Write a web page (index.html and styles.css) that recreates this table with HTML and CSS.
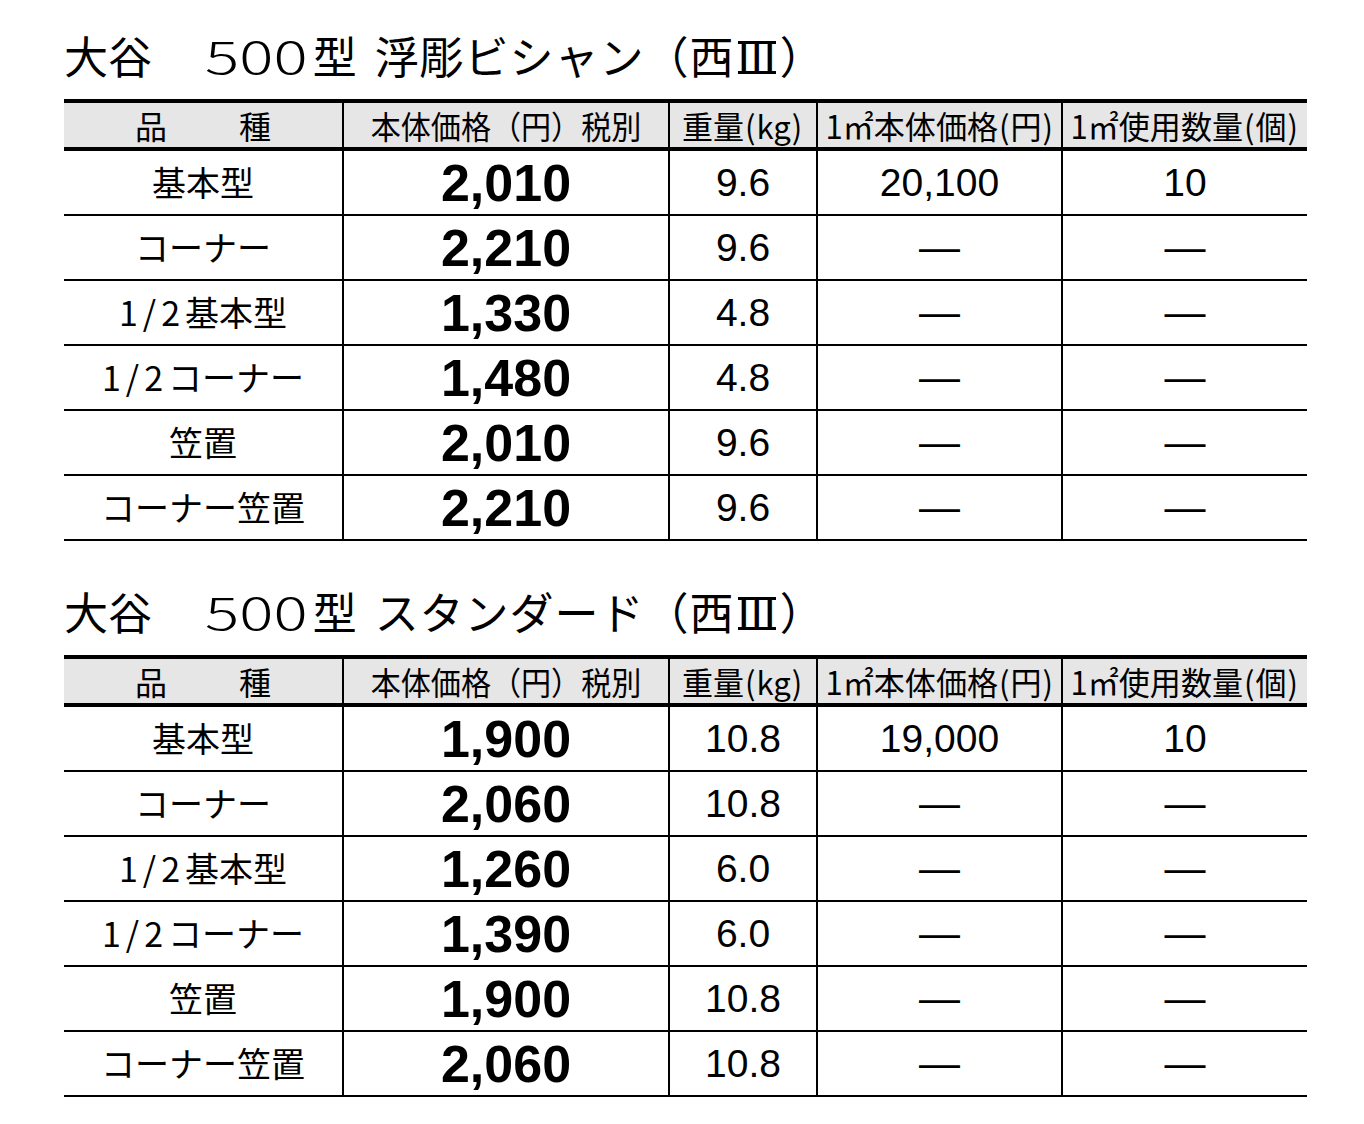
FILE: index.html
```html
<!DOCTYPE html>
<html lang="ja">
<head>
<meta charset="utf-8">
<title>大谷 500型</title>
<link rel="stylesheet" href="styles.css">
</head>
<body>
<div class="page">
  <section class="sec">
    <h2 class="title">大谷<span class="gap">　</span><span class="num">500</span>型<span class="name">浮彫ビシャン（西<span class="r3">Ⅲ</span>）</span></h2>
    <div class="tbl">
      <div class="hd"><span class="hd-name"><span>品</span><span>種</span></span></div>
      <div class="hd"><span class="lbl lbl-price">本体価格（円）税別</span></div>
      <div class="hd"><span class="lbl">重量<span class="p">(</span>kg<span class="p">)</span></span></div>
      <div class="hd"><span class="lbl">1㎡本体価格<span class="p">(</span>円<span class="p">)</span></span></div>
      <div class="hd"><span class="lbl">1㎡使用数量<span class="p">(</span>個<span class="p">)</span></span></div>

      <div class="c nm">基本型</div><div class="c pr">2,010</div><div class="c v">9.6</div><div class="c v">20,100</div><div class="c v">10</div>
      <div class="c nm">コーナー</div><div class="c pr">2,210</div><div class="c v">9.6</div><div class="c v d">—</div><div class="c v d">—</div>
      <div class="c nm"><span class="frac">1/2</span>基本型</div><div class="c pr">1,330</div><div class="c v">4.8</div><div class="c v d">—</div><div class="c v d">—</div>
      <div class="c nm"><span class="frac">1/2</span>コーナー</div><div class="c pr">1,480</div><div class="c v">4.8</div><div class="c v d">—</div><div class="c v d">—</div>
      <div class="c nm">笠置</div><div class="c pr">2,010</div><div class="c v">9.6</div><div class="c v d">—</div><div class="c v d">—</div>
      <div class="c nm">コーナー笠置</div><div class="c pr">2,210</div><div class="c v">9.6</div><div class="c v d">—</div><div class="c v d">—</div>
    </div>
  </section>

  <section class="sec sec2">
    <h2 class="title">大谷<span class="gap">　</span><span class="num">500</span>型<span class="name">スタンダード（西<span class="r3">Ⅲ</span>）</span></h2>
    <div class="tbl">
      <div class="hd"><span class="hd-name"><span>品</span><span>種</span></span></div>
      <div class="hd"><span class="lbl lbl-price">本体価格（円）税別</span></div>
      <div class="hd"><span class="lbl">重量<span class="p">(</span>kg<span class="p">)</span></span></div>
      <div class="hd"><span class="lbl">1㎡本体価格<span class="p">(</span>円<span class="p">)</span></span></div>
      <div class="hd"><span class="lbl">1㎡使用数量<span class="p">(</span>個<span class="p">)</span></span></div>

      <div class="c nm">基本型</div><div class="c pr">1,900</div><div class="c v">10.8</div><div class="c v">19,000</div><div class="c v">10</div>
      <div class="c nm">コーナー</div><div class="c pr">2,060</div><div class="c v">10.8</div><div class="c v d">—</div><div class="c v d">—</div>
      <div class="c nm"><span class="frac">1/2</span>基本型</div><div class="c pr">1,260</div><div class="c v">6.0</div><div class="c v d">—</div><div class="c v d">—</div>
      <div class="c nm"><span class="frac">1/2</span>コーナー</div><div class="c pr">1,390</div><div class="c v">6.0</div><div class="c v d">—</div><div class="c v d">—</div>
      <div class="c nm">笠置</div><div class="c pr">1,900</div><div class="c v">10.8</div><div class="c v d">—</div><div class="c v d">—</div>
      <div class="c nm">コーナー笠置</div><div class="c pr">2,060</div><div class="c v">10.8</div><div class="c v d">—</div><div class="c v d">—</div>
    </div>
  </section>
</div>
</body>
</html>
```

FILE: styles.css
```css
html, body {
  margin: 0;
  padding: 0;
  background: #fff;
  color: #000;
  font-family: "Noto Sans CJK JP", "Noto Sans", sans-serif;
}

.page {
  padding: 25px 0 40px 64px;
}

.sec2 {
  margin-top: 40px;
}

.title {
  margin: 0;
  font-size: 44px;
  font-weight: 400;
  line-height: 60px;
  height: 60px;
  white-space: nowrap;
}

.title .num {
  display: inline-block;
  font-weight: 300;
  transform: scaleX(1.45);
  margin-left: 25px;
  margin-right: 21px;
}

.title .name {
  margin-left: 18px;
  letter-spacing: 1px;
}

.r3 {
  position: relative;
  display: inline-block;
}

.r3::before,
.r3::after {
  content: "";
  position: absolute;
  left: 3px;
  right: 4px;
  height: 3px;
  background: #000;
}

.r3::before {
  top: 16px;
}

.r3::after {
  top: 46px;
}

.tbl {
  margin-top: 14px;
  width: 1243px;
  display: grid;
  grid-template-columns: 278px 326px 148px 245px 246px;
  border-top: 4px solid #000;
}

.hd {
  box-sizing: border-box;
  height: 48px;
  background: #e6e6e6;
  border-bottom: 4px solid #000;
  display: flex;
  align-items: center;
  justify-content: center;
  font-size: 32px;
  line-height: 1;
  white-space: nowrap;
}

.hd + .hd {
  border-left: 2px solid #000;
}

.lbl {
  display: inline-block;
  transform: scaleX(0.97);
}

.lbl-price {
  transform: scaleX(0.94);
}

.lbl .p {
  margin: 0 1px;
}

.hd-name {
  display: flex;
  gap: 72px;
}

.c {
  box-sizing: border-box;
  height: 65px;
  border-bottom: 2px solid #000;
  display: flex;
  align-items: center;
  justify-content: center;
  white-space: nowrap;
  line-height: 1;
}

.c:not(.nm) {
  border-left: 2px solid #000;
}

.nm {
  font-size: 34px;
  padding-bottom: 2px;
}

.frac {
  letter-spacing: 5px;
}

.pr {
  font-family: "Liberation Sans", Arial, sans-serif;
  font-weight: 700;
  font-size: 52px;
}

.v {
  font-family: "Liberation Sans", Arial, sans-serif;
  font-size: 39px;
}

.d {
  font-size: 41px;
}
```
